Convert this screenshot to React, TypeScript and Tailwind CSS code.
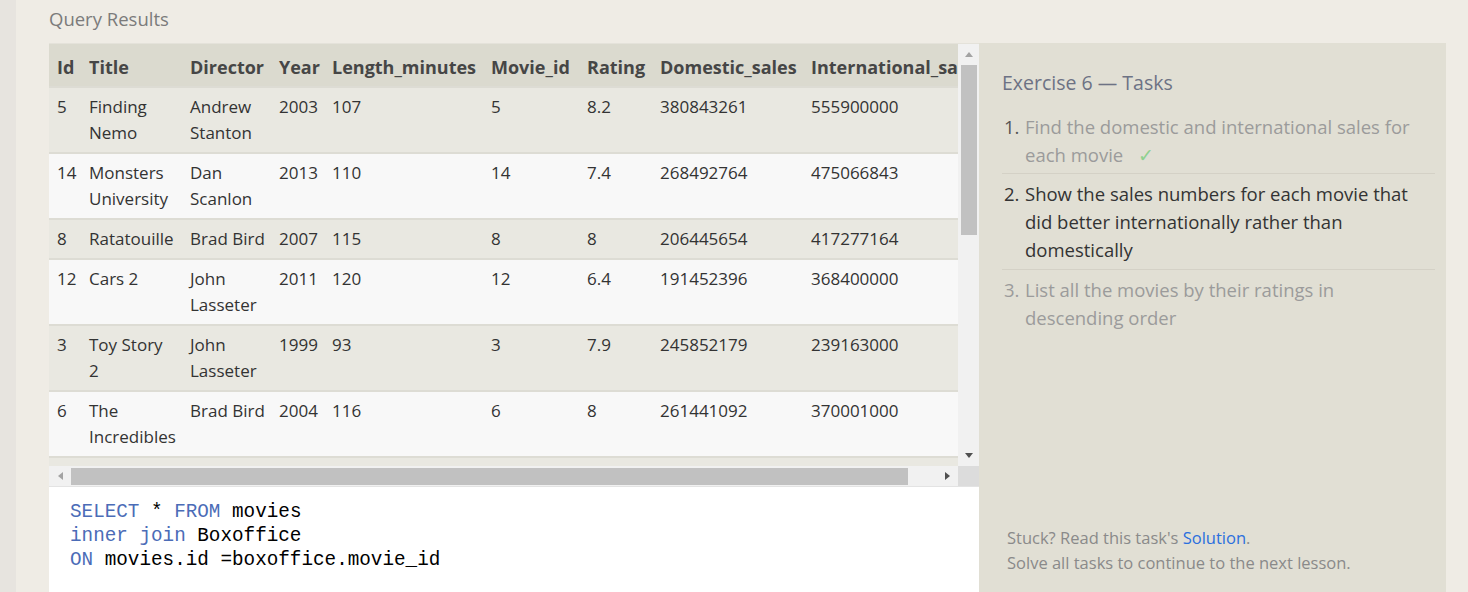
import React from "react";

type Row = { cells: string[][] };

const cols = [
  { h: "Id", c: "w-[32px]" },
  { h: "Title", c: "w-[101px]" },
  { h: "Director", c: "w-[89px]" },
  { h: "Year", c: "w-[53px]" },
  { h: "Length_minutes", c: "w-[159px]" },
  { h: "Movie_id", c: "w-[96px]" },
  { h: "Rating", c: "w-[73px]" },
  { h: "Domestic_sales", c: "w-[151px]" },
  { h: "International_sales", c: "w-[200px]" },
];

const rows: Row[] = [
  { cells: [["5"], ["Finding", "Nemo"], ["Andrew", "Stanton"], ["2003"], ["107"], ["5"], ["8.2"], ["380843261"], ["555900000"]] },
  { cells: [["14"], ["Monsters", "University"], ["Dan", "Scanlon"], ["2013"], ["110"], ["14"], ["7.4"], ["268492764"], ["475066843"]] },
  { cells: [["8"], ["Ratatouille"], ["Brad Bird"], ["2007"], ["115"], ["8"], ["8"], ["206445654"], ["417277164"]] },
  { cells: [["12"], ["Cars 2"], ["John", "Lasseter"], ["2011"], ["120"], ["12"], ["6.4"], ["191452396"], ["368400000"]] },
  { cells: [["3"], ["Toy Story", "2"], ["John", "Lasseter"], ["1999"], ["93"], ["3"], ["7.9"], ["245852179"], ["239163000"]] },
  { cells: [["6"], ["The", "Incredibles"], ["Brad Bird"], ["2004"], ["116"], ["6"], ["8"], ["261441092"], ["370001000"]] },
  { cells: [["9"], ["WALL-E"], ["Andrew", "Stanton"], ["2008"], ["104"], ["9"], ["8.5"], ["223808164"], ["297503696"]] },
];

function Tri({ dir, color }: { dir: "up" | "down" | "left" | "right"; color: string }) {
  const pts =
    dir === "up"
      ? "0,5 4,0 8,5"
      : dir === "down"
      ? "0,0 8,0 4,5"
      : dir === "left"
      ? "5,0 5,8 0,4"
      : "0,0 0,8 5,4";
  const w = dir === "up" || dir === "down" ? 8 : 5;
  const h = dir === "up" || dir === "down" ? 5 : 8;
  return (
    <svg width={w} height={h} viewBox={`0 0 ${w} ${h}`}>
      <polygon points={pts} fill={color} />
    </svg>
  );
}

export default function App() {
  const sans = "font-['Open_Sans','Noto_Sans',sans-serif]";
  return (
    <div className={`flex h-[592px] w-[1468px] overflow-hidden bg-[#efece5] ${sans}`}>
      <div className="w-4 shrink-0 bg-[#e7e4df]" />
      <div className="flex flex-1 flex-col pl-[33px]">
        <div className="flex h-[43px] shrink-0 items-start pt-[5px] text-[18.5px] leading-[28px] text-[#7b7b7b]">
          Query Results
        </div>
        <div className="flex flex-1">
          {/* left column */}
          <div className="flex w-[930px] shrink-0 flex-col">
            <div className="flex h-[423px] border-t border-[#e4e2da]">
              <div className="h-full w-[909px] overflow-hidden">
                <table className="w-[954px] table-fixed border-collapse text-left">
                  <colgroup>
                    {cols.map((c) => (
                      <col key={c.h} className={c.c} />
                    ))}
                  </colgroup>
                  <thead>
                    <tr className="h-[43px] bg-[#dbdacf]">
                      {cols.map((c) => (
                        <th
                          key={c.h}
                          className="whitespace-nowrap px-2 pt-[3px] align-middle text-[18px] font-bold leading-[26px] text-[#464646]"
                        >
                          {c.h}
                        </th>
                      ))}
                    </tr>
                  </thead>
                  <tbody>
                    {rows.map((r, i) => (
                      <tr
                        key={i}
                        className={`border-t-2 border-[#dddcd4] ${i % 2 === 0 ? "bg-[#e9e8e1]" : "bg-[#f8f8f8]"}`}
                      >
                        {r.cells.map((cell, j) => (
                          <td
                            key={j}
                            className="whitespace-nowrap px-2 pb-[6px] pt-[6px] align-top text-[17px] leading-[26px] text-[#333333]"
                          >
                            {cell.map((line, k) => (
                              <div key={k}>{line}</div>
                            ))}
                          </td>
                        ))}
                      </tr>
                    ))}
                  </tbody>
                </table>
              </div>
              {/* vertical scrollbar */}
              <div className="flex h-full w-[21px] flex-col items-center bg-[#f1f1f1]">
                <div className="flex h-[21px] w-full items-center justify-center">
                  <Tri dir="up" color="#a3a3a3" />
                </div>
                <div className="relative w-full flex-1">
                  <div className="absolute left-[3px] right-[2px] top-0 h-[170px] bg-[#c1c1c1]" />
                </div>
                <div className="flex h-[21px] w-full items-center justify-center">
                  <Tri dir="down" color="#505050" />
                </div>
              </div>
            </div>
            {/* horizontal scrollbar */}
            <div className="flex h-[21px] border-b border-[#e3e3e3]">
              <div className="flex w-[909px] items-center bg-[#f1f1f1]">
                <div className="flex w-[22px] items-center justify-center">
                  <Tri dir="left" color="#a3a3a3" />
                </div>
                <div className="h-[17px] w-[837px] bg-[#c1c1c1]" />
                <div className="flex flex-1 items-center justify-end pr-[8px]">
                  <Tri dir="right" color="#505050" />
                </div>
              </div>
              <div className="w-[21px] bg-[#dcdcdc]" />
            </div>
            {/* code editor */}
            <div className="flex-1 bg-white pl-[21px] pt-[13px] font-['Liberation_Mono',monospace] text-[19.3px] leading-[24px] text-black">
              <div>
                <span className="text-[#4b6cb7]">SELECT</span> * <span className="text-[#4b6cb7]">FROM</span> movies
              </div>
              <div>
                <span className="text-[#4b6cb7]">inner join</span> Boxoffice
              </div>
              <div>
                <span className="text-[#4b6cb7]">ON</span> movies.id =boxoffice.movie_id
              </div>
            </div>
          </div>
          {/* right panel */}
          <div className="flex w-[467px] shrink-0 flex-col justify-between bg-[#e1dfd4] pb-[17px]">
            <div className="pl-[23px] pr-[11px] pt-[26px]">
              <div className="text-[19.5px] leading-[28px] text-[#6d7284]">Exercise 6 — Tasks</div>
              <ol className="mt-[16px] text-[18.5px] leading-[28px]">
                <li className="flex border-b border-[#d4d1c6] pb-[4px]">
                  <span className="w-[23px] shrink-0 pl-[2px] text-[#555555]">1.</span>
                  <span className="text-[#9b9b9b]">
                    Find the domestic and international sales for
                    <br />
                    each movie <span className="ml-[10px] text-[#8fd18f]">✓</span>
                  </span>
                </li>
                <li className="flex border-b border-[#d4d1c6] pb-[5px] pt-[6px] text-[#333333]">
                  <span className="w-[23px] shrink-0 pl-[2px]">2.</span>
                  <span>
                    Show the sales numbers for each movie that
                    <br />
                    did better internationally rather than
                    <br />
                    domestically
                  </span>
                </li>
                <li className="flex pt-[6px] text-[#9b9b9b]">
                  <span className="w-[23px] shrink-0 pl-[2px]">3.</span>
                  <span>
                    List all the movies by their ratings in
                    <br />
                    descending order
                  </span>
                </li>
              </ol>
            </div>
            <div className="pl-[28px] text-[16.5px] leading-[25px] text-[#8a8a8a]">
              <div>
                Stuck? Read this task's <span className="text-[#2b6fde]">Solution</span>.
              </div>
              <div>Solve all tasks to continue to the next lesson.</div>
            </div>
          </div>
        </div>
      </div>
    </div>
  );
}
